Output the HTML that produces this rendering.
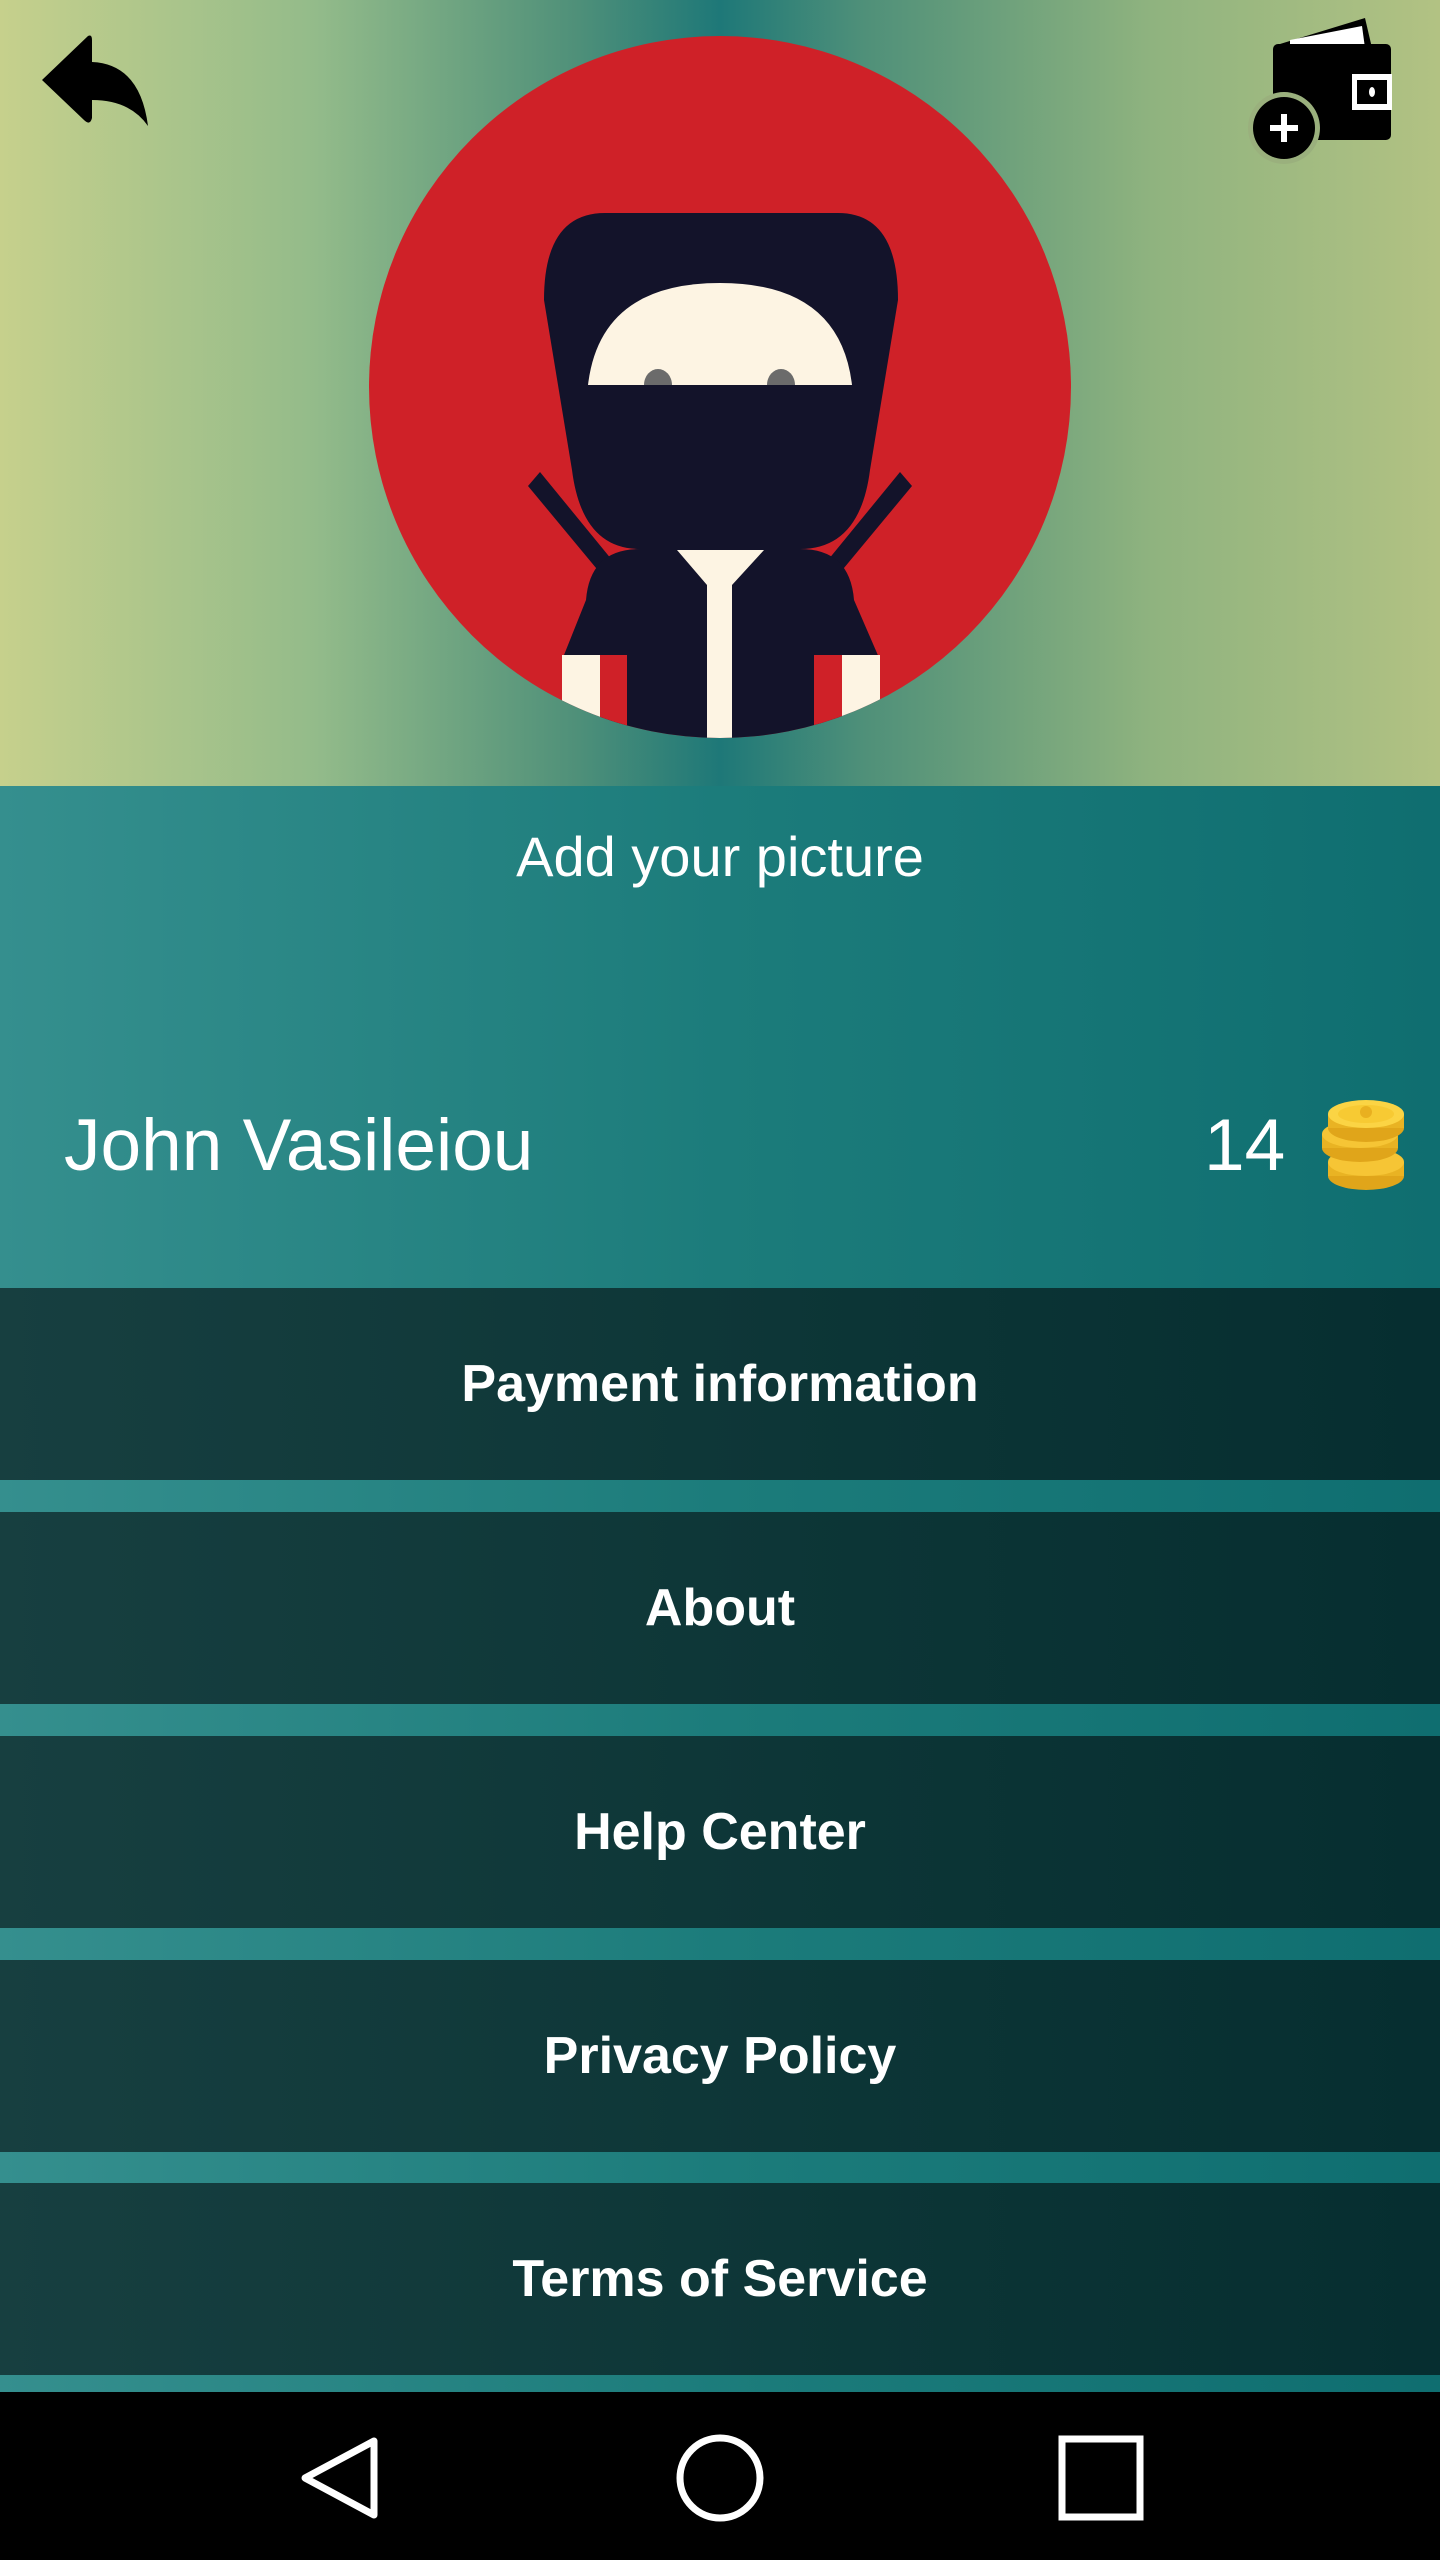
<!DOCTYPE html>
<html><head><meta charset="utf-8"><style>
*{margin:0;padding:0;box-sizing:border-box}
body{width:1440px;height:2560px;overflow:hidden;font-family:"Liberation Sans",sans-serif;background:#000;position:relative}
svg{display:block}
.hdr{position:absolute;left:0;top:0;width:1440px;height:786px;background:linear-gradient(90deg,#c6d08c 0%,#93bb8a 22%,#4f9079 40%,#1e7878 50%,#4f9079 60%,#8fb37f 80%,#b2c283 100%)}
.teal{position:absolute;left:0;top:786px;width:1440px;height:1606px;background:linear-gradient(90deg,#358f8e 0%,#1c7c7b 50%,#0f6e70 100%)}
.item{position:absolute;left:0;width:1440px;height:192px;background:linear-gradient(90deg,#173f40 0%,#0c3536 60%,#062e30 100%);color:#fff;font-weight:bold;font-size:52px;text-align:center;line-height:192px}
.t{position:absolute;color:#fff}
.nav{position:absolute;left:0;top:2392px;width:1440px;height:168px;background:#000}
</style></head><body>
<div class="hdr"></div>
<svg style="position:absolute;left:0;top:0" width="1440" height="786">
<defs><clipPath id="c"><circle cx="720" cy="387" r="351"/></clipPath></defs>
<circle cx="720" cy="387" r="351" fill="#cf2128"/>
<g clip-path="url(#c)">
<path d="M528 486 L540 472 L612 560 L606 580Z" fill="#13132a"/>
<path d="M912 486 L900 472 L828 560 L834 580Z" fill="#13132a"/>
<path d="M586 600 Q590 549 640 549 L800 549 Q850 549 854 600 L880 660 L880 740 L562 740 L562 660Z" fill="#13132a"/>
<rect x="562" y="655" width="38" height="90" fill="#fdf4e3"/>
<rect x="600" y="655" width="27" height="90" fill="#cf2128"/>
<rect x="842" y="655" width="38" height="90" fill="#fdf4e3"/>
<rect x="814" y="655" width="28" height="90" fill="#cf2128"/>
<path d="M677 550 L764 550 L732 585 L732 740 L707 740 L707 585Z" fill="#fdf4e3"/>
<path d="M605 213 L838 213 Q898 213 898 300 L870 470 Q860 549 800 549 L640 549 Q582 549 572 470 L544 300 Q544 213 605 213Z" fill="#13132a"/>
<path d="M588 385 Q600 283 720 283 Q840 283 852 385Z" fill="#fdf4e3"/>
<ellipse cx="658" cy="385" rx="14" ry="16" fill="#6b6b6b"/>
<ellipse cx="781" cy="385" rx="14" ry="16" fill="#6b6b6b"/>
<rect x="580" y="385" width="290" height="20" fill="#13132a"/>
</g>
<path d="M42 80 L88 36 Q92 34 92 40 L92 62 Q140 64 148 126 Q130 100 92 100 L92 118 Q90 126 84 120Z" fill="#000"/>
<path d="M1280 44 L1365 18 L1372 48Z" fill="#000"/>
<path d="M1290 40 L1362 26 L1365 48 L1290 48Z" fill="#fff"/>
<rect x="1273" y="44" width="118" height="96" rx="5" fill="#000"/>
<rect x="1352" y="74" width="40" height="36" fill="#fff"/><rect x="1357" y="80" width="30" height="24" fill="#000"/>
<ellipse cx="1372" cy="92" rx="3" ry="5" fill="#fff"/>
<circle cx="1284" cy="128" r="36" fill="#9ab07d"/>
<circle cx="1284" cy="128" r="31" fill="#000"/>
<path d="M1284 114 V142 M1270 128 H1298" stroke="#fff" stroke-width="6"/>
</svg>
<div class="teal"></div>
<div class="t" style="left:0;width:1440px;text-align:center;top:824px;font-size:56px">Add your picture</div>
<div class="t" style="left:64px;top:1104px;font-size:73px">John Vasileiou</div>
<div class="t" style="left:1204px;top:1104px;font-size:73px">14</div>
<svg style="position:absolute;left:1314px;top:1096px" width="100" height="104">
<ellipse cx="52" cy="80" rx="38" ry="14" fill="#e0a51a"/><rect x="14" y="66" width="76" height="14" fill="#e9b323"/><ellipse cx="52" cy="66" rx="38" ry="14" fill="#f6c535"/>
<ellipse cx="46" cy="52" rx="38" ry="14" fill="#e0a51a"/><rect x="8" y="38" width="76" height="14" fill="#e9b323"/><ellipse cx="46" cy="38" rx="38" ry="14" fill="#f6c535"/>
<ellipse cx="52" cy="32" rx="38" ry="14" fill="#e0a51a"/><rect x="14" y="18" width="76" height="14" fill="#e9b323"/><ellipse cx="52" cy="18" rx="38" ry="14" fill="#fbd444"/>
<ellipse cx="52" cy="18" rx="28" ry="9" fill="#f7ca33"/><circle cx="52" cy="16" r="6" fill="#e9b020"/>
</svg>
<div class="item" style="top:1288px">Payment information</div>
<div class="item" style="top:1512px">About</div>
<div class="item" style="top:1736px">Help Center</div>
<div class="item" style="top:1960px">Privacy Policy</div>
<div class="item" style="top:2183px">Terms of Service</div>
<div class="nav"><svg width="1440" height="168">
<path d="M374 49 L374 123 L305 86Z" fill="none" stroke="#fff" stroke-width="7" stroke-linejoin="round"/>
<circle cx="720" cy="86" r="40" fill="none" stroke="#fff" stroke-width="7"/>
<rect x="1062" y="47" width="78" height="78" fill="none" stroke="#fff" stroke-width="7"/>
</svg></div>
</body></html>
